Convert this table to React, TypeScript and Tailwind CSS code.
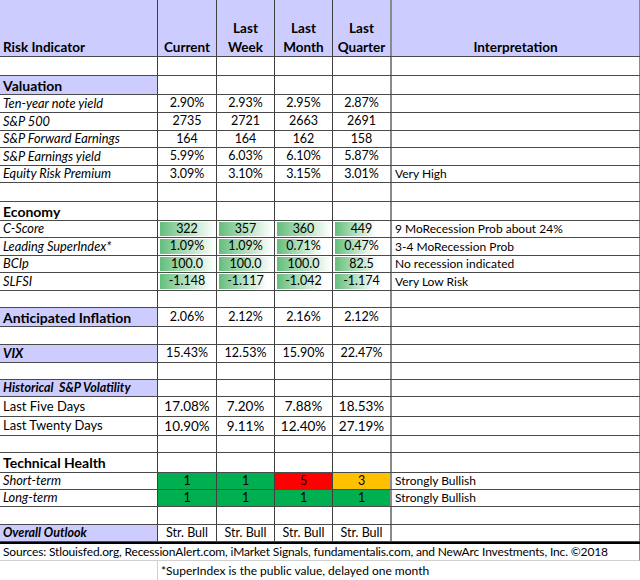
import React from 'react'

const font = "font-['Lato','Liberation_Sans',sans-serif]"

type Bar = number | null

interface RowProps {
  h: string
  label?: string
  labelClass?: string
  fill?: boolean
  values?: string[]
  valueClass?: string
  bars?: Bar[]
  colors?: string[]
  interp?: string
}

const colW = ['w-[158px]', 'w-[59px]', 'w-[58px]', 'w-[58px]', 'w-[59px]']

const Row: React.FC<RowProps> = ({ h, label, labelClass = '', fill, values = [], valueClass = 'text-[12.5px]', bars, colors, interp }) => {
  return (
    <div className={`flex ${h} border-b border-[#4a4a4a]`}>
      <div className={`${colW[0]} shrink-0 border-r border-[#404040] flex items-center pl-[3px] whitespace-nowrap ${fill ? 'bg-[#ccccff]' : ''} ${labelClass}`}>
        {label}
      </div>
      {[0, 1, 2, 3].map(i => {
        const bar = bars?.[i]
        return (
          <div
            key={i}
            className={`${colW[i + 1]} shrink-0 relative flex items-center justify-center ${i === 3 ? 'border-r-2 border-[#8a8a8a]' : 'border-r border-[#404040]'} ${colors?.[i] ?? ''} ${valueClass}`}
          >
            {bar != null && (
              <div
                className="absolute left-[2px] top-[1px] bottom-[1px] bg-linear-to-r from-[#63be7b] via-[#b3e0bf] to-white"
                style={{ width: `${bar}%` }}
              />
            )}
            <span className="relative">{values[i] ?? ''}</span>
          </div>
        )
      })}
      <div className="flex-1 flex items-center pl-[3px] text-[12px] whitespace-nowrap border-r border-[#8a8a8a]">{interp}</div>
    </div>
  )
}

const Header: React.FC = () => {
  const heads: [string, string][] = [
    ['', 'Current'],
    ['Last', 'Week'],
    ['Last', 'Month'],
    ['Last', 'Quarter'],
  ]
  return (
    <div className="flex h-[57px] border-b border-[#4a4a4a] bg-[#ccccff] font-bold text-[13.5px] leading-[17px]">
      <div className="w-[158px] shrink-0 border-r border-[#404040] flex items-end pl-[3px]">Risk Indicator</div>
      {heads.map((hd, i) => (
        <div
          key={i}
          className={`${colW[i + 1]} shrink-0 flex flex-col items-center justify-end gap-[2px] ${i === 3 ? 'border-r-2 border-[#8a8a8a]' : 'border-r border-[#404040]'}`}
        >
          {hd[0] && <span>{hd[0]}</span>}
          <span>{hd[1]}</span>
        </div>
      ))}
      <div className="flex-1 flex items-end justify-center border-r border-[#8a8a8a]">Interpretation</div>
    </div>
  )
}

const italic = 'italic text-[12.8px]'
const green = 'bg-[#00b050]'

export default function App() {
  return (
    <div className={`w-[640px] h-[580px] bg-white text-black overflow-hidden ${font}`}>
      <Header />
      <Row h="h-[19px]" />
      <Row h="h-[19px]" label="Valuation" labelClass="font-bold text-[14px]" fill />
      <Row h="h-[18px]" label="Ten-year note yield" labelClass={italic} values={['2.90%', '2.93%', '2.95%', '2.87%']} />
      <Row h="h-[18px]" label="S&P 500" labelClass={italic} values={['2735', '2721', '2663', '2691']} />
      <Row h="h-[17px]" label="S&P Forward Earnings" labelClass={italic} values={['164', '164', '162', '158']} />
      <Row h="h-[18px]" label="S&P Earnings yield" labelClass={italic} values={['5.99%', '6.03%', '6.10%', '5.87%']} />
      <Row h="h-[17px]" label="Equity Risk Premium" labelClass={italic} values={['3.09%', '3.10%', '3.15%', '3.01%']} interp="Very High" />
      <Row h="h-[19px]" />
      <Row h="h-[19px]" label="Economy" labelClass="font-bold text-[14px]" />
      <Row h="h-[17px]" label="C-Score" labelClass={italic} values={['322', '357', '360', '449']} bars={[95, 95, 95, 72]} interp="9 MoRecession Prob about 24%" />
      <Row h="h-[18px]" label="Leading SuperIndex*" labelClass={italic} values={['1.09%', '1.09%', '0.71%', '0.47%']} bars={[95, 95, 80, 68]} interp="3-4 MoRecession Prob" />
      <Row h="h-[17px]" label="BCIp" labelClass={italic} values={['100.0', '100.0', '100.0', '82.5']} bars={[95, 95, 95, 75]} interp="No recession indicated" />
      <Row h="h-[18px]" label="SLFSI" labelClass={italic} values={['-1.148', '-1.117', '-1.042', '-1.174']} bars={[90, 85, 82, 72]} interp="Very Low Risk" />
      <Row h="h-[17px]" />
      <Row h="h-[19px]" label="Anticipated Inflation" labelClass="font-bold text-[14px]" fill values={['2.06%', '2.12%', '2.16%', '2.12%']} />
      <Row h="h-[18px]" />
      <Row h="h-[18px]" label="VIX" labelClass="font-bold italic text-[13px]" fill values={['15.43%', '12.53%', '15.90%', '22.47%']} />
      <Row h="h-[17px]" />
      <Row h="h-[17px]" label="Historical  S&P Volatility" labelClass="font-bold italic text-[12.5px] whitespace-pre" fill />
      <Row h="h-[20px]" label="Last Five Days" labelClass="text-[13px]" values={['17.08%', '7.20%', '7.88%', '18.53%']} valueClass="text-[13.5px]" />
      <Row h="h-[19px]" label="Last Twenty Days" labelClass="text-[13px]" values={['10.90%', '9.11%', '12.40%', '27.19%']} valueClass="text-[13.5px]" />
      <Row h="h-[17px]" />
      <Row h="h-[20px]" label="Technical Health" labelClass="font-bold text-[14px]" />
      <Row h="h-[17px]" label="Short-term" labelClass={italic} values={['1', '1', '5', '3']} colors={[green, green, 'bg-[#ff0000]', 'bg-[#ffc000]']} interp="Strongly Bullish" />
      <Row h="h-[17px]" label="Long-term" labelClass={italic} values={['1', '1', '1', '1']} colors={[green, green, green, green]} interp="Strongly Bullish" />
      <Row h="h-[18px]" />
      <div className="border-b-2 border-black">
        <Row h="h-[17px]" label="Overall Outlook" labelClass="font-bold italic text-[12.5px]" fill values={['Str. Bull', 'Str. Bull', 'Str. Bull', 'Str. Bull']} />
      </div>
      <div className="h-[17px] flex items-center pl-[3px] text-[12px] tracking-[-0.15px] whitespace-nowrap border-b border-[#d0d0d0] border-r border-r-[#8a8a8a]">
        Sources: Stlouisfed.org, RecessionAlert.com, iMarket Signals, fundamentalis.com, and NewArc Investments, Inc. ©2018
      </div>
      <div className="flex h-[20px] text-[12px]">
        <div className="w-[158px] shrink-0 border-r border-[#d0d0d0]" />
        <div className="flex-1 flex items-center pl-[3px] whitespace-nowrap">*SuperIndex is the public value, delayed one month</div>
      </div>
    </div>
  )
}
